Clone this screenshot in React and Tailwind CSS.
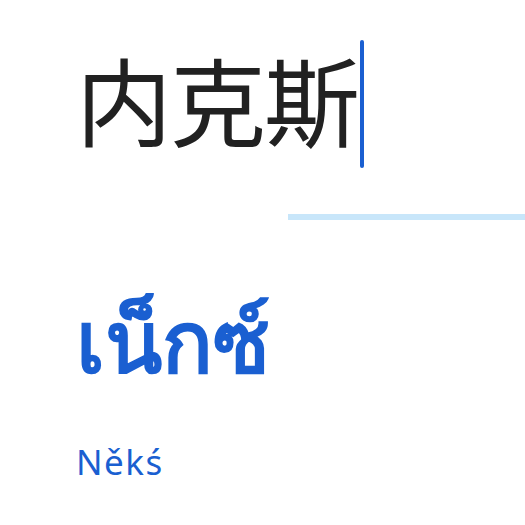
export default function App() {
  return (
    <div className="w-[525px] h-[525px] bg-white overflow-hidden" style={{ fontFamily: '"Noto Sans", "Noto Sans CJK SC", sans-serif' }}>
      <div className="flex items-start pl-[76px] pt-[40px]">
        <span className="mt-[10px] text-[96px] leading-none text-[#212121] tracking-[-2px]" style={{ fontFamily: '"Noto Sans CJK SC", sans-serif' }}>
          内克斯
        </span>
        <span className="ml-[2px] w-[4px] h-[128px] rounded-full bg-[#1a5fd1]"></span>
      </div>
      <div className="mt-[46px] ml-[288px] h-[6px] bg-[#c8e6fa]"></div>
      <div className="pl-[76px] mt-[78px]">
        <div className="text-[84px] leading-none font-bold text-[#1a5fd1]">เน็กซ์</div>
        <div className="mt-[62px] text-[35px] leading-none tracking-[1.5px] text-[#1a5fd1]">Někś</div>
      </div>
    </div>
  );
}
